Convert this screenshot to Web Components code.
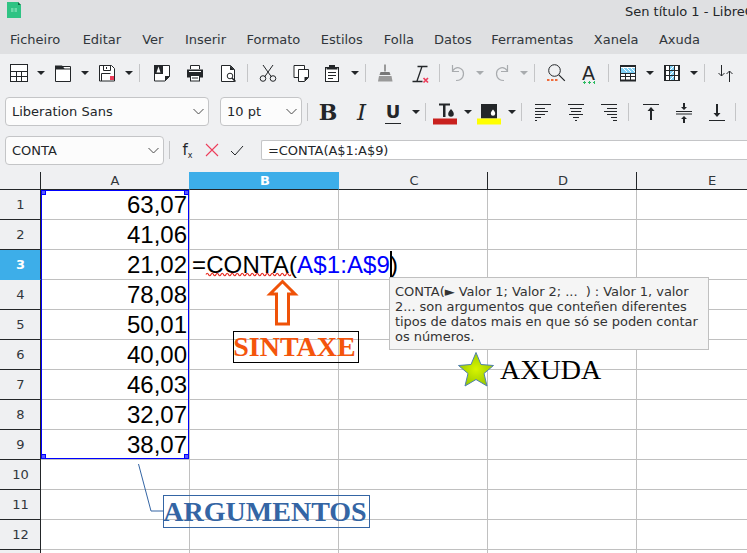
<!DOCTYPE html>
<html lang="gl">
<head>
<meta charset="utf-8">
<title>Sen título 1 - LibreOffice Calc</title>
<style>
html,body{margin:0;height:100%;overflow:hidden;background:#eff0f2;}
body{display:flex;flex-direction:column;font:13px "DejaVu Sans",sans-serif;color:#232629;}
</style>
</head>
<body>
<lo-titlebar>Sen título 1 - LibreOffice Calc</lo-titlebar>
<lo-menubar>
	<lo-menu style="margin-left:10px;margin-right:22.500px">Ficheiro</lo-menu><lo-menu style="margin-right:21px">Editar</lo-menu><lo-menu style="margin-right:21.500px">Ver</lo-menu><lo-menu style="margin-right:20.500px">Inserir</lo-menu><lo-menu style="margin-right:20.500px">Formato</lo-menu><lo-menu style="margin-right:21px">Estilos</lo-menu><lo-menu style="margin-right:20px">Folla</lo-menu><lo-menu style="margin-right:19.500px">Datos</lo-menu><lo-menu style="margin-right:20.500px">Ferramentas</lo-menu><lo-menu style="margin-right:20.500px">Xanela</lo-menu><lo-menu>Axuda</lo-menu>
</lo-menubar>
<lo-toolbar style="height:38px;padding-left:2.500px">
	<lo-tool icon="table"></lo-tool><lo-drop></lo-drop>
	<lo-tool icon="folder"></lo-tool><lo-drop></lo-drop>
	<lo-tool icon="save"></lo-tool><lo-drop></lo-drop><lo-sep></lo-sep>
	<lo-tool icon="template"></lo-tool><lo-tool icon="print"></lo-tool><lo-tool icon="preview"></lo-tool><lo-sep style="margin:0 4px 0 2.500px"></lo-sep>
	<lo-tool icon="cut"></lo-tool><lo-tool icon="copy"></lo-tool><lo-tool icon="paste" w="29"></lo-tool><lo-drop style="margin-left:3px"></lo-drop><lo-sep style="margin:0 4px"></lo-sep>
	<lo-tool icon="brush" w="31"></lo-tool><lo-tool icon="clear" w="38"></lo-tool><lo-sep style="margin:0 3px 0 0"></lo-sep>
	<lo-tool icon="undo" w="31"></lo-tool><lo-drop style="margin-left:1px" off></lo-drop><lo-tool icon="redo"></lo-tool><lo-drop off></lo-drop><lo-sep style="margin:0 4px 0 4.500px"></lo-sep>
	<lo-tool icon="find"></lo-tool><lo-tool><lo-glyph name="char"></lo-glyph></lo-tool><lo-sep style="margin:0 3px 0 2.500px"></lo-sep>
	<lo-tool icon="rows"></lo-tool><lo-drop></lo-drop><lo-tool icon="cols"></lo-tool><lo-drop></lo-drop><lo-sep style="margin:0 4px 0 4.500px"></lo-sep>
	<lo-tool icon="sort"></lo-tool>
</lo-toolbar>
<lo-toolbar style="height:39px;padding-left:5px">
	<lo-combo style="width:204px">Liberation Sans</lo-combo>
	<lo-combo style="width:82px;margin-left:11px">10 pt</lo-combo>
	<lo-sep></lo-sep>
	<lo-tool w="31"><lo-glyph name="bold"></lo-glyph></lo-tool><lo-tool w="36"><lo-glyph name="italic"></lo-glyph></lo-tool><lo-tool w="27"><lo-glyph name="under"></lo-glyph></lo-tool><lo-drop style="margin-left:3.500px"></lo-drop><lo-sep style="margin:0 5px 0 4px"></lo-sep>
	<lo-tool icon="fontcolor" w="28"></lo-tool><lo-drop style="margin-left:3px"></lo-drop><lo-tool icon="bgcolor" w="32"></lo-tool><lo-drop style="margin-left:1px"></lo-drop><lo-sep style="margin:0 5px 0 4px"></lo-sep>
	<lo-tool icon="left" w="32"></lo-tool><lo-tool icon="center"></lo-tool><lo-tool icon="right"></lo-tool><lo-sep style="margin:0 5px 0 3px"></lo-sep>
	<lo-tool icon="top"></lo-tool><lo-tool icon="middle"></lo-tool><lo-tool icon="bottom"></lo-tool><lo-sep style="margin:0 0 0 2px"></lo-sep>
</lo-toolbar>
<lo-formulabar>
	<lo-combo slot="name" style="width:159px">CONTA</lo-combo>
	=CONTA(A$1:A$9)
</lo-formulabar>
<lo-sheet></lo-sheet>

<script>
'use strict';

const icons = {
	table:'<rect x="1.500" y="1.500" width="17" height="17" fill="#fff"/><path d="M1.500 8.500h17M1.500 13.500h17M7.500 8.500v10M12.500 8.500v10"/>',
	folder:'<path d="M2.500 3.500h15v15h-15z" fill="#fff"/><path d="M2 2.500h7l2.500 3H18v1H2z" fill="#232629" stroke="none"/>',
	save:'<path d="M2.500 2.500h12l3 3v12.500h-15z" fill="#fff"/><path d="M6.500 2.500v5h7v-5M9.500 4v2"/><path d="M4.500 18V10.500h9" fill="none"/><rect x="13" y="13" width="4" height="4" fill="#ed3d5a" stroke="none"/>',
	template:'<path d="M2.500 2.500h15v11l-4.500 4.500h-10.500z" fill="#fff"/><path d="M2 2h9v9H2z" fill="#232629" stroke="none"/><path d="M4.500 9.500l2-6 2 6z" fill="#fff" stroke="none"/><path d="M13 13h5l-5 5z" fill="#232629" stroke="none"/>',
	print:'<path d="M5.500 6V2.500h9V6" fill="#fff"/><path d="M2 6.500h16v8H2z" fill="#232629" stroke="none"/><path d="M4 8.500h12" stroke="#fff"/><rect x="5.500" y="12.500" width="9" height="5.500" fill="#fff"/><path d="M7 15h6" />',
	preview:'<path d="M3.500 2.500h9l4 4V18.500h-13z" fill="#fff"/><path d="M12 2.500v4.500h4.500z" fill="#232629" stroke="none"/><circle cx="12" cy="13" r="2.800" fill="#fff"/><path d="M14 15l3.500 3.500" stroke-width="1.500"/>',
	cut:'<path d="M5 2l8.500 12M15 2L6.500 14"/><circle cx="5" cy="15.500" r="2.800" fill="none"/><circle cx="15" cy="15.500" r="2.800" fill="none"/>',
	copy:'<path d="M3 2.500h10.500v12H3z" fill="#fff"/><path d="M7.500 6.500h10v8l-4 4h-6z" fill="#fff"/><path d="M13.500 18.500v-4.500h4z" fill="#232629" stroke="none"/>',
	paste:'<rect x="3.500" y="4.500" width="13" height="14" fill="#fff"/><path d="M7 2h6v2h2.500v2.500h-11V4H7z" fill="#232629" stroke="none"/><path d="M6 9.500h8M6 12.500h8M6 15.500h5"/>',
	brush:'<path d="M9 1.500h2v7H9z" fill="#999" stroke="none"/><path d="M5.500 9h9l1 3h-11z" fill="#777" stroke="none"/><path d="M4 13h12.500l1 5.500H3z" fill="#999" stroke="none"/>',
	clear:'<path d="M7.500 3.500h10M12 3.500L7 18M2.500 18.500h10" stroke-width="1.300"/><path d="M13.500 15l4.500 4.500M18 15l-4.500 4.500" stroke="#ed3d5a" stroke-width="1.700"/>',
	undo:'<path d="M4.500 8C7 4.500 10 4 12.500 5.500c4 2 4 8 0 11-1.200.8-2.800 1-4.500 1" stroke="#a8abae" stroke-width="1.200"/><path d="M4.500 2v6.500h6.500" stroke="#a8abae" stroke-width="1.200"/>',
	redo:'<path d="M15.500 8C13 4.500 10 4 7.500 5.500c-4 2-4 8 0 11 1.200.8 2.800 1 4.500 1" stroke="#a8abae" stroke-width="1.200"/><path d="M15.500 2v6.500H9" stroke="#a8abae" stroke-width="1.200"/>',
	find:'<circle cx="8.500" cy="7.500" r="5.800"/><path d="M12.800 11.800l6 6" stroke-width="1.200"/><path d="M1 17h2.500M5 17h2.500M9 17h2.500" stroke="#ef6b3b" stroke-width="2"/>',
	rows:'<rect x="2.500" y="2.500" width="15" height="15" fill="#fff"/><path d="M2 2h16v2H2zM2 16.500h16v2H2z" fill="#232629" stroke="none"/><path d="M3 5h14v5H3z" fill="#80d0f5" stroke="none"/><path d="M2.500 10.500h15M2.500 13.500h15M7.500 11v6M12.500 11v6"/><path d="M5 5l4 4M9 5l4 4M13 5l4 4" stroke="#fff"/>',
	cols:'<rect x="2.500" y="2.500" width="15" height="15" fill="#fff"/><path d="M2 2h2v16H2zM16 2h2v16h-2z" fill="#232629" stroke="none"/><path d="M7.500 2.500h5v15h-5z" fill="#80d0f5" stroke="none"/><path d="M2.500 2.500h15M2.500 7.500h15M2.500 12.500h15M2.500 17.500h15M7.500 2.500v15M12.500 2.500v15"/><path d="M8 17l4-4M8 12l4-4M8 7l4-4" stroke="#fff"/>',
	sort:'<path d="M5.500 2v11M2.500 10l3 3 3-3M13.500 19V8M10.500 11l3-3 3 3"/>',
	fontcolor:'<path d="M8 5.500h11v2H14.500V19h-2.500V7.500H8z" fill="#232629" stroke="none"/><path d="M20 11c1.500 2 2.800 3.200 2.800 5a2.800 2.800 0 1 1-5.600 0c0-1.800 1.300-3 2.800-5z" fill="#232629" stroke="none"/><rect x="2" y="20.500" width="24" height="6" fill="#c9211e" stroke="none"/>',
	bgcolor:'<rect x="6" y="6" width="16" height="14.500" fill="#232629" stroke="none"/><path d="M18 11.500c1.200 1.600 2.200 2.600 2.200 4a2.200 2.200 0 1 1-4.400 0c0-1.400 1-2.400 2.200-4z" fill="#fff" stroke="none"/><rect x="2" y="20.500" width="24" height="6" fill="#ff0" stroke="none"/>',
	left:'<path d="M2 2.500h16M2 6.500h10M2 9.500h13M2 12.500h10M2 15.500h6M2 18.500h2"/>',
	center:'<path d="M2 2.500h16M4 6.500h12M5 9.500h10M3 12.500h14M7 15.500h6M9 18.500h2"/>',
	right:'<path d="M2 2.500h16M8 6.500h10M5 9.500h13M8 12.500h10M12 15.500h6M14 18.500h4"/>',
	top:'<path d="M2 2.500h16"/><path d="M10 18V7" stroke-width="2"/><path d="M6.500 9L10 5l3.500 4z" fill="#232629" stroke="none"/>',
	middle:'<path d="M2 9.500h16M2 12h16"/><path d="M10 1v5M10 16v5" stroke-width="2"/><path d="M7 5h6l-3 3zM7 17h6l-3-3z" fill="#232629" stroke="none"/>',
	bottom:'<path d="M2 18.500h16"/><path d="M10 2v11" stroke-width="2"/><path d="M6.500 11L10 15l3.500-4z" fill="#232629" stroke="none"/>',
};

function define(name, css, html, init){
	customElements.define(name, class extends HTMLElement {
		constructor(){
			super();
			this.attachShadow({mode:'open'});
			this.shadowRoot.innerHTML = '<style>'+css+'</style>'+html;
		}
		connectedCallback(){
			if(init) init(this, this.shadowRoot);
		}
	});
}

define('lo-titlebar', `
:host{display:flex;align-items:center;height:26px;flex:none;background:#dfe0e2;overflow:hidden;white-space:nowrap;}
svg{margin:0 0 6px 7px;flex:none;}
span{margin-left:604px;margin-bottom:4px;color:#232629;}
`, `<svg width="14" height="16" viewBox="0 0 14 16"><path d="M0 0h11l3 3v13H0z" fill="#2fc384"/><path d="M11 0l3 3h-3z" fill="#106d45"/><path d="M4 6h2.500v4H4zM7.500 6H10v4H7.500z" fill="#6cd9aa"/></svg><span><slot></slot></span>`);

define('lo-menubar', `
:host{display:flex;align-items:center;height:28px;flex:none;background:#dfe0e2;white-space:nowrap;padding-bottom:1px;box-sizing:border-box;}
`, `<slot></slot>`);

define('lo-menu', `
:host{display:block;color:#31363b;}
`, `<slot></slot>`);

define('lo-toolbar', `
:host{display:flex;align-items:center;flex:none;background:#eff0f2;overflow:hidden;}
`, `<slot></slot>`);

define('lo-tool', `
:host{display:flex;align-items:center;justify-content:center;flex:none;width:33px;height:28px;}
svg{overflow:visible;flex:none;}
`, `<slot></slot>`, (el, root)=>{
	if(el.hasAttribute('w')) el.style.width = el.getAttribute('w')+'px';
	let name = el.getAttribute('icon');
	if(!name || root.querySelector('svg')) return;
	let box = (name=='fontcolor' || name=='bgcolor') ? 28 : 20;
	root.innerHTML += `<svg width="${box}" height="${box}" viewBox="0 0 ${box} ${box}" fill="none" stroke="#232629" stroke-width="1">${icons[name]}</svg>`;
});

define('lo-glyph', `
:host{display:block;color:#232629;line-height:1;}
.bold{font:bold 22px "DejaVu Serif",serif;}
.italic{font:italic 400 23px "DejaVu Serif",serif;}
.under{font:bold 18px "DejaVu Sans",sans-serif;border-bottom:1px solid #232629;padding:0 1px 3px;display:block;line-height:17px;margin-top:3px;}
.char{font:19px "DejaVu Sans",sans-serif;display:block;line-height:20px;padding-bottom:1px;background:radial-gradient(circle,#2dbb62 1px,transparent 1.300px) 0 bottom/5px 3px repeat-x;}
`, `<span></span>`, (el, root)=>{
	let name = el.getAttribute('name');
	let span = root.querySelector('span');
	span.className = name;
	span.textContent = {bold:'B',italic:'I',under:'U',char:'A'}[name];
});

define('lo-drop', `
:host{display:block;flex:none;width:11px;height:8px;}
i{display:block;width:0;height:0;margin:2px 1.500px;border:4px solid transparent;border-top:4px solid #232629;border-bottom:0;}
:host([off]) i{border-top-color:#a8abae;}
`, `<i></i>`);

define('lo-sep', `
:host{display:block;flex:none;width:1px;height:18px;margin:0 5px 0 4.500px;background:#c4c5c7;}
`, ``);

define('lo-combo', `
:host{display:flex;align-items:center;flex:none;box-sizing:border-box;height:29px;background:#fcfcfc;border:1px solid #c4c5c7;border-radius:4px;padding-left:6px;color:#232629;}
svg{margin-left:auto;margin-right:4px;}
`, `<slot></slot><svg width="11" height="7" viewBox="0 0 11 7"><path d="M.5 1l5 5 5-5" fill="none" stroke="#4d4d4d" stroke-width="1"/></svg>`);

define('lo-formulabar', `
:host{display:flex;align-items:center;height:41px;box-sizing:border-box;padding:0 0 3px 5px;flex:none;background:#eff0f2;overflow:hidden;white-space:nowrap;}
.sep{width:1px;height:18px;background:#c4c5c7;margin:0 0 0 5px;flex:none;}
.btn{flex:none;width:25px;display:flex;justify-content:center;align-items:center;}
.fx{font:15px "DejaVu Sans",sans-serif;color:#232629;width:35px;}
.fx small{font-size:8px;position:relative;top:3px;}
input-box{flex:1;display:flex;align-items:center;height:18px;margin-left:12px;padding-left:6px;letter-spacing:-.05px;background:#fff;border:solid #c4c5c7;border-width:1px 0 1px 1px;border-radius:2px 0 0 2px;color:#232629;font:13px "DejaVu Sans",sans-serif;}
`, `<slot name="name"></slot><div class="sep"></div>
<div class="btn fx"><span>f<small>x</small></span></div>
<div class="btn" style="margin-left:-6px"><svg width="14" height="14" viewBox="0 0 14 14"><path d="M1 1l12 12M13 1L1 13" stroke="#ed3d5a" stroke-width="1.100" fill="none"/></svg></div>
<div class="btn"><svg width="14" height="11" viewBox="0 0 14 11"><path d="M1 6l4 4 8-9" stroke="#232629" stroke-width="1" fill="none"/></svg></div>
<input-box><slot></slot></input-box>`);

const COLS = ['A','B','C','D','E'];
const VALUES = ['63,07','41,06','21,02','78,08','50,01','40,00','46,03','32,07','38,07'];

define('lo-sheet', `
:host{display:block;flex:1;position:relative;background:#fff;overflow:hidden;font:13px "DejaVu Sans",sans-serif;}
.grid{display:grid;grid-template-columns:41px repeat(5,149px);grid-template-rows:18px repeat(13,30px);}
.corner,.ch,.rh,.c{box-sizing:border-box;}
.corner{background:#eff0f2;border-right:1px solid #232629;border-bottom:1px solid #232629;}
.ch{background:#eff0f2;border-bottom:1px solid #232629;border-right:1px solid #232629;display:flex;align-items:center;justify-content:center;color:#31363b;padding-left:2px;}
.ch.first{border-right-color:#3daee9;padding-left:0;}
.ch.on{background:#3daee9;color:#fff;font-weight:bold;border-right-color:#3daee9;}
.rh{background:#eff0f2;border-right:1px solid #232629;border-bottom:1px solid #232629;display:flex;align-items:center;justify-content:center;color:#31363b;padding-left:1px;}
.rh.on{background:#3daee9;color:#fff;font-weight:bold;border-bottom-color:#3daee9;}
.c{border-right:1px solid #c0c0c0;border-bottom:1px solid #c0c0c0;font:24px "Liberation Sans",sans-serif;color:#000;display:flex;align-items:center;justify-content:flex-end;padding:1px 2px 0 0;}

.sel{position:absolute;left:41px;top:18px;width:148px;height:269px;box-sizing:border-box;border:1px solid #0000ff;outline:.4px solid #0000ff;outline-offset:-1px;}
.hd{position:absolute;width:5px;height:5px;box-sizing:border-box;background:#5a5aff;border:1px solid #0000ff;}

.edit{position:absolute;left:190px;top:78px;width:208px;height:29px;background:#fff;padding-left:2px;box-sizing:border-box;font:24px/29px "Liberation Sans",sans-serif;letter-spacing:.12px;color:#000;white-space:nowrap;}
.ref{color:#0000ff;}
.caret{display:inline-block;width:2px;height:26px;background:#000;vertical-align:-4px;margin-right:-2px;}

.tip{position:absolute;left:389px;top:105px;width:320px;height:73px;box-sizing:border-box;background:#f5f5f5;border:1px solid #c0c0c0;padding:6px 5px;color:#333;font:13px/15px "DejaVu Sans",sans-serif;letter-spacing:-.045px;white-space:pre;}

.lbl{position:absolute;box-sizing:border-box;display:flex;align-items:center;justify-content:center;white-space:nowrap;font:bold 28px "Liberation Serif",serif;padding-right:3px;}
.syn{left:233px;top:159px;width:126px;height:32px;border:1px solid #000;color:#f4550c;}
.arg{left:163px;top:323px;width:207px;height:33px;border:1px solid #3465a4;color:#3465a4;}
.axuda{position:absolute;left:500px;top:182px;font:28px/32px "Liberation Serif",serif;color:#000;white-space:nowrap;}
svg.shape{position:absolute;left:0;top:0;overflow:visible;}
`, `<div class="grid"></div>
<svg class="shape" width="747" height="381" viewBox="0 172 747 381">
	<defs><radialGradient id="st"><stop offset="0" stop-color="#d8f500"/><stop offset="1" stop-color="#9ccb00"/></radialGradient></defs>
	<path d="M282.500 281.500L295 294h-6.500v30h-12V294H270z" fill="#fff" stroke="#ef5208" stroke-width="3"/>
	<path d="M476 352.500l5 12 12.500 1-9.500 8 3 12.500-11-6.500-11 6.500 3-12.500-9.500-8 12.500-1z" fill="url(#st)" stroke="#4f7fae" stroke-width="1"/>
	<path d="M138.500 464L151 511h12" fill="none" stroke="#3465a4" stroke-width="1"/>
</svg>
<div class="sel"></div>
<div class="hd" style="left:41px;top:18px"></div><div class="hd" style="left:184px;top:18px"></div>
<div class="hd" style="left:41px;top:282px"></div><div class="hd" style="left:184px;top:282px"></div>
<div class="edit">=CONTA(<span class="ref">A$1:A$9</span><span class="caret"></span>)</div>
<svg class="shape" width="747" height="381" viewBox="0 172 747 381"><path class="wave" fill="none" stroke="#e8281e" stroke-width="1.200"/></svg>
<div class="tip">CONTA(► Valor 1; Valor 2; ...  ) : Valor 1, valor
2... son argumentos que conteñen diferentes
tipos de datos mais en que só se poden contar
os números.</div>
<div class="lbl syn">SINTAXE</div>
<div class="lbl arg">ARGUMENTOS</div>
<div class="axuda">AXUDA</div>`, (el, root)=>{
	let grid = root.querySelector('.grid');
	if(grid.children.length) return;
	root.querySelector('.wave').setAttribute('d', 'M206 274.500'+'q1.250-2.500 2.500 0q1.250 2.500 2.500 0'.repeat(17));
	let html = ['<div class="corner"></div>'];
	COLS.forEach(c=>{
		let cls = c=='B' ? ' on' : (c=='A' ? ' first' : '');
		html.push(`<div class="ch${cls}">${c}</div>`);
	});
	for(let r=1; r<=13; r++){
		html.push(`<div class="rh${r==3?' on':''}">${r<13?r:''}</div>`);
		COLS.forEach((c,i)=>{
			let val = (i==0 && VALUES[r-1]) ? VALUES[r-1] : '';
			html.push(`<div class="c">${val}</div>`);
		});
	}
	grid.innerHTML = html.join('');
});
</script>
</body>
</html>
